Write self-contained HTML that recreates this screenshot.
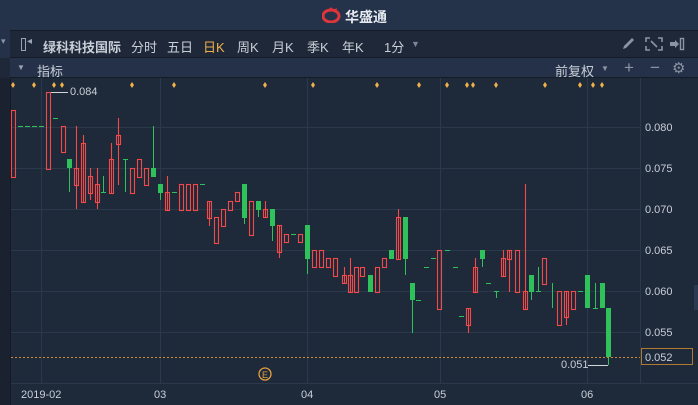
<!DOCTYPE html>
<html><head><meta charset="utf-8"><style>
html,body{margin:0;padding:0;width:698px;height:405px;overflow:hidden;background:#1e293a;font-family:"Liberation Sans","Noto Sans CJK SC",sans-serif;}
.t{position:absolute;left:0;top:0;width:698px;height:30px;background:#24324a;}
.tb{position:absolute;left:0;top:30px;width:698px;height:28px;background:#1f2838;border-top:1px solid #151c28;border-bottom:1px solid #151c28;box-sizing:border-box;}
.sb{position:absolute;left:0;top:58px;width:698px;height:20px;background:#253148;border-bottom:1px solid #151c28;box-sizing:border-box;}
.tx{position:absolute;font-size:13px;color:#c9cfd8;white-space:nowrap;}
.r rect,.r line{stroke:#f24a48;fill:none;}
</style></head><body>
<div class="t"></div>
<div style="position:absolute;left:322px;top:7px;width:20px;height:16px;">
<svg width="20" height="16"><ellipse cx="9" cy="9" rx="8" ry="6" fill="none" stroke="#e0353a" stroke-width="3"/><path d="M6 3 L9 0 L11 3 L15 1 L14 5" fill="#e0353a"/></svg></div>
<div class="tx" style="left:345px;top:7px;font-size:14px;font-weight:bold;color:#e8ecf2;">华盛通</div>
<div class="tb"></div>
<div style="position:absolute;left:0;top:30px;width:10px;height:28px;background:#253148;"></div>
<div class="tx" style="left:1px;top:36px;font-size:9px;color:#8a94a3;">▾</div>
<div style="position:absolute;left:21px;top:38px;width:3px;height:11px;border:1px solid #9aa3b0;"></div>
<div class="tx" style="left:27px;top:36px;font-size:10px;color:#9aa3b0;">◂</div>
<div class="tx" style="left:43px;top:37px;font-weight:bold;">绿科科技国际</div>
<div class="tx" style="left:131px;top:37px;">分时</div>
<div class="tx" style="left:167px;top:37px;">五日</div>
<div class="tx" style="left:203px;top:37px;color:#f0b14a;">日K</div>
<div class="tx" style="left:237px;top:37px;">周K</div>
<div class="tx" style="left:272px;top:37px;">月K</div>
<div class="tx" style="left:307px;top:37px;">季K</div>
<div class="tx" style="left:342px;top:37px;">年K</div>
<div class="tx" style="left:384px;top:37px;">1分</div>
<div class="tx" style="left:411px;top:39px;font-size:9px;color:#7a8596;">▼</div>
<svg style="position:absolute;left:620px;top:36px" width="78" height="16">
<path d="M3 13 L4 10 L12 2 L14 4 L6 12 Z" fill="#8a94a3"/>
<path d="M30 2h-4v4M38 2h4v4M30 14h-4v-4M38 14h4v-4" stroke="#8a94a3" stroke-width="1.6" fill="none"/>
<path d="M31 5l3 3M37 11l-3-3" stroke="#8a94a3" stroke-width="1.6"/>
<path d="M50 6h5v-2l4 4-4 4v-2h-5z" fill="#8a94a3"/><rect x="60.5" y="2.5" width="3" height="11" fill="none" stroke="#8a94a3" stroke-width="1.4"/>
</svg>
<div class="sb"></div>
<div style="position:absolute;left:0;top:58px;width:10px;height:20px;background:#1f2838;"></div>
<div class="tx" style="left:17px;top:63px;font-size:8px;color:#9aa3b0;">▼</div>
<div class="tx" style="left:37px;top:61px;">指标</div>
<div class="tx" style="left:555px;top:61px;">前复权</div>
<div class="tx" style="left:601px;top:64px;font-size:8px;color:#8a94a3;">▼</div>
<div class="tx" style="left:624px;top:58px;font-size:17px;color:#8a94a3;">+</div>
<div class="tx" style="left:650px;top:58px;font-size:17px;color:#8a94a3;">−</div>
<div class="tx" style="left:672px;top:59px;font-size:15px;color:#8a94a3;">⚙</div>
<svg style="position:absolute;left:0;top:78px" width="698" height="327" viewBox="0 78 698 327">
<rect x="0" y="78" width="10" height="327" fill="#1a2230"/>
<line x1="10.5" y1="78" x2="10.5" y2="405" stroke="#141b26"/>
<g stroke="#2b394d" stroke-width="1">
<line x1="11" y1="127.5" x2="640" y2="127.5"/><line x1="11" y1="168.5" x2="640" y2="168.5"/><line x1="11" y1="209.5" x2="640" y2="209.5"/><line x1="11" y1="250.5" x2="640" y2="250.5"/><line x1="11" y1="291.5" x2="640" y2="291.5"/><line x1="11" y1="332.5" x2="640" y2="332.5"/>
<line x1="41.5" y1="78" x2="41.5" y2="383"/><line x1="160.5" y1="78" x2="160.5" y2="383"/><line x1="307.5" y1="78" x2="307.5" y2="383"/><line x1="440.5" y1="78" x2="440.5" y2="383"/><line x1="587.5" y1="78" x2="587.5" y2="383"/>
<line x1="640.5" y1="78" x2="640.5" y2="383"/>
<line x1="11" y1="383.5" x2="698" y2="383.5"/>
</g>
<g fill="#f0b14a">
<path d="M13 82l2 3-2 3-2-3z"/><path d="M34 82l2 3-2 3-2-3z"/><path d="M54 82l2 3-2 3-2-3z"/><path d="M62 82l2 3-2 3-2-3z"/><path d="M132 82l2 3-2 3-2-3z"/><path d="M174 82l2 3-2 3-2-3z"/><path d="M265 82l2 3-2 3-2-3z"/><path d="M313 82l2 3-2 3-2-3z"/><path d="M377 82l2 3-2 3-2-3z"/><path d="M419 82l2 3-2 3-2-3z"/><path d="M447 82l2 3-2 3-2-3z"/><path d="M467 82l2 3-2 3-2-3z"/><path d="M473 82l2 3-2 3-2-3z"/><path d="M496 82l2 3-2 3-2-3z"/><path d="M545 82l2 3-2 3-2-3z"/><path d="M580 82l2 3-2 3-2-3z"/><path d="M593 82l2 3-2 3-2-3z"/><path d="M602 82l2 3-2 3-2-3z"/>
</g>
<line x1="46" y1="92.5" x2="68" y2="92.5" stroke="#d0d5dc"/>
<text x="70" y="95" font-size="11" fill="#c9cfd8">0.084</text>
<g class="r" stroke-width="1.1">
<rect x="11.5" y="110.5" width="4" height="67"/>
<rect x="46.5" y="92.5" width="4" height="77"/>
<rect x="61.5" y="126.5" width="4" height="26"/>
<line x1="76.5" y1="126" x2="76.5" y2="209"/><rect x="74.5" y="168.5" width="4" height="17"/>
<line x1="83.5" y1="135" x2="83.5" y2="202"/><rect x="81.5" y="143.5" width="4" height="59"/>
<line x1="90.5" y1="168" x2="90.5" y2="200"/><rect x="88.5" y="176.5" width="4" height="17"/>
<line x1="97.5" y1="168" x2="97.5" y2="209"/><rect x="95.5" y="184.5" width="4" height="18"/>
<line x1="111.5" y1="143" x2="111.5" y2="193"/><rect x="109.5" y="159.5" width="4" height="34"/>
<line x1="118.5" y1="118" x2="118.5" y2="185"/><rect x="116.5" y="135.5" width="4" height="9"/>
<rect x="130.5" y="168.5" width="4" height="25"/>
<rect x="137.5" y="159.5" width="4" height="18"/>
<rect x="144.5" y="168.5" width="4" height="17"/>
<line x1="167.5" y1="176" x2="167.5" y2="210"/><rect x="165.5" y="192.5" width="4" height="18"/>
<rect x="179.5" y="184.5" width="4" height="26"/><rect x="186.5" y="184.5" width="4" height="26"/><rect x="193.5" y="184.5" width="4" height="26"/>
<line x1="209.5" y1="201" x2="209.5" y2="226"/><rect x="207.5" y="201.5" width="4" height="17"/>
<rect x="214.5" y="217.5" width="4" height="26"/>
<rect x="221.5" y="209.5" width="4" height="17"/>
<rect x="228.5" y="201.5" width="4" height="9"/>
<rect x="235.5" y="192.5" width="4" height="9"/>
<rect x="249.5" y="201.5" width="4" height="34"/>
<line x1="265.5" y1="201" x2="265.5" y2="217"/><rect x="263.5" y="209.5" width="4" height="8"/>
<line x1="279.5" y1="225" x2="279.5" y2="258"/><rect x="277.5" y="225.5" width="4" height="27"/>
<rect x="284.5" y="234.5" width="4" height="8"/>
<rect x="298.5" y="234.5" width="4" height="8"/>
<rect x="312.5" y="250.5" width="4" height="17"/>
<rect x="319.5" y="250.5" width="4" height="17"/>
<rect x="326.5" y="258.5" width="4" height="9"/>
<rect x="333.5" y="258.5" width="4" height="18"/>
<line x1="344.5" y1="267" x2="344.5" y2="283"/><rect x="342.5" y="275.5" width="4" height="8"/>
<line x1="350.5" y1="258" x2="350.5" y2="292"/><rect x="348.5" y="275.5" width="4" height="17"/>
<rect x="354.5" y="267.5" width="4" height="25"/>
<rect x="360.5" y="267.5" width="4" height="9"/>
<rect x="375.5" y="267.5" width="4" height="25"/>
<rect x="382.5" y="258.5" width="4" height="9"/>
<line x1="398.5" y1="209" x2="398.5" y2="259"/><rect x="396.5" y="217.5" width="4" height="42"/>
<rect x="437.5" y="250.5" width="4" height="59"/>
<line x1="468.5" y1="308" x2="468.5" y2="333"/><rect x="466.5" y="308.5" width="4" height="17"/>
<line x1="475.5" y1="258" x2="475.5" y2="292"/><rect x="473.5" y="267.5" width="4" height="25"/>
<line x1="503.5" y1="250" x2="503.5" y2="276"/><rect x="501.5" y="258.5" width="4" height="18"/>
<line x1="509.5" y1="250" x2="509.5" y2="292"/><rect x="507.5" y="250.5" width="4" height="9"/>
<rect x="515.5" y="250.5" width="4" height="42"/>
<line x1="525.5" y1="184" x2="525.5" y2="309"/><rect x="523.5" y="291.5" width="4" height="18"/>
<rect x="542.5" y="258.5" width="4" height="26"/>
<rect x="557.5" y="291.5" width="4" height="34"/>
<line x1="566.5" y1="291" x2="566.5" y2="325"/><rect x="564.5" y="291.5" width="4" height="26"/>
<rect x="571.5" y="291.5" width="4" height="18"/>
</g>
<g stroke="#2fc25b" stroke-width="1" fill="#2fc25b">
<line x1="18" y1="126.5" x2="44" y2="126.5" stroke-dasharray="5,2"/>
<line x1="53" y1="118.5" x2="58" y2="118.5"/>
<line x1="69.5" y1="159" x2="69.5" y2="192"/><rect x="67" y="159" width="5" height="9" stroke="none"/>
<line x1="103.5" y1="176" x2="103.5" y2="192"/><line x1="101" y1="192.5" x2="106" y2="192.5"/>
<line x1="125.5" y1="159" x2="125.5" y2="192"/><line x1="123" y1="159.5" x2="128" y2="159.5"/>
<line x1="153.5" y1="126" x2="153.5" y2="176"/><rect x="151" y="168" width="5" height="9" stroke="none"/>
<line x1="160.5" y1="184" x2="160.5" y2="200"/><rect x="158" y="184" width="5" height="9" stroke="none"/>
<line x1="172" y1="192.5" x2="177" y2="192.5"/>
<line x1="200" y1="184.5" x2="205" y2="184.5"/>
<line x1="244.5" y1="184" x2="244.5" y2="224"/><rect x="242" y="184" width="5" height="34" stroke="none"/>
<line x1="258.5" y1="201" x2="258.5" y2="217"/><rect x="256" y="201" width="5" height="9" stroke="none"/>
<line x1="272.5" y1="209" x2="272.5" y2="241"/><rect x="270" y="209" width="5" height="17" stroke="none"/>
<line x1="291" y1="234.5" x2="296" y2="234.5"/>
<line x1="307.5" y1="225" x2="307.5" y2="274"/><rect x="305" y="225" width="5" height="34" stroke="none"/>
<rect x="368" y="275" width="5" height="17" stroke="none"/>
<rect x="389" y="250" width="5" height="9" stroke="none"/>
<line x1="405.5" y1="217" x2="405.5" y2="275"/><rect x="403" y="217" width="5" height="42" stroke="none"/>
<line x1="412.5" y1="283" x2="412.5" y2="333"/><rect x="410" y="283" width="5" height="17" stroke="none"/>
<line x1="416" y1="300.5" x2="421" y2="300.5"/>
<line x1="424" y1="267.5" x2="429" y2="267.5"/><line x1="431" y1="258.5" x2="436" y2="258.5"/>
<line x1="445" y1="250.5" x2="450" y2="250.5"/><line x1="453" y1="267.5" x2="458" y2="267.5"/><line x1="459" y1="316.5" x2="464" y2="316.5"/>
<line x1="482.5" y1="250" x2="482.5" y2="267"/><rect x="480" y="250" width="5" height="9" stroke="none"/>
<line x1="486" y1="283.5" x2="491" y2="283.5"/>
<line x1="496.5" y1="291" x2="496.5" y2="298"/><line x1="494" y1="291.5" x2="499" y2="291.5"/>
<line x1="531.5" y1="275" x2="531.5" y2="300"/><rect x="529" y="275" width="5" height="17" stroke="none"/>
<line x1="538.5" y1="267" x2="538.5" y2="291"/><line x1="536" y1="291.5" x2="541" y2="291.5"/>
<line x1="552.5" y1="283" x2="552.5" y2="308"/>
<line x1="578" y1="291.5" x2="583" y2="291.5"/>
<rect x="585" y="275" width="5" height="33" stroke="none"/>
<line x1="595.5" y1="283" x2="595.5" y2="308"/><line x1="593" y1="308.5" x2="598" y2="308.5"/>
<rect x="600" y="283" width="5" height="25" stroke="none"/>
<line x1="608.5" y1="308" x2="608.5" y2="365"/><rect x="606" y="308" width="5" height="49" stroke="none"/>
</g>
<line x1="11" y1="357.5" x2="640" y2="357.5" stroke="#d08a3a" stroke-dasharray="2,2"/>
<line x1="588" y1="365.5" x2="608" y2="365.5" stroke="#d0d5dc"/>
<text x="561" y="368" font-size="11" fill="#c9cfd8">0.051</text>
<g font-size="11" fill="#c9cfd8">
<text x="645" y="131">0.080</text><text x="645" y="172">0.075</text><text x="645" y="213">0.070</text><text x="645" y="254">0.065</text><text x="645" y="295">0.060</text><text x="645" y="336">0.055</text>
<text x="21" y="398">2019-02</text><text x="154" y="398">03</text><text x="301" y="398">04</text><text x="434" y="398">05</text><text x="581" y="398">06</text>
</g>
<rect x="641.5" y="348.5" width="51" height="16" fill="#1e293a" stroke="#b07a35"/>
<text x="645" y="361" font-size="11" fill="#c9cfd8">0.052</text>
<circle cx="265" cy="374" r="6" fill="none" stroke="#e0a040" stroke-width="1.3"/>
<text x="262" y="378" font-size="9" fill="#e0a040">E</text>
<rect x="694" y="285" width="4" height="25" fill="#2b3a50"/>
</svg>
</body></html>
